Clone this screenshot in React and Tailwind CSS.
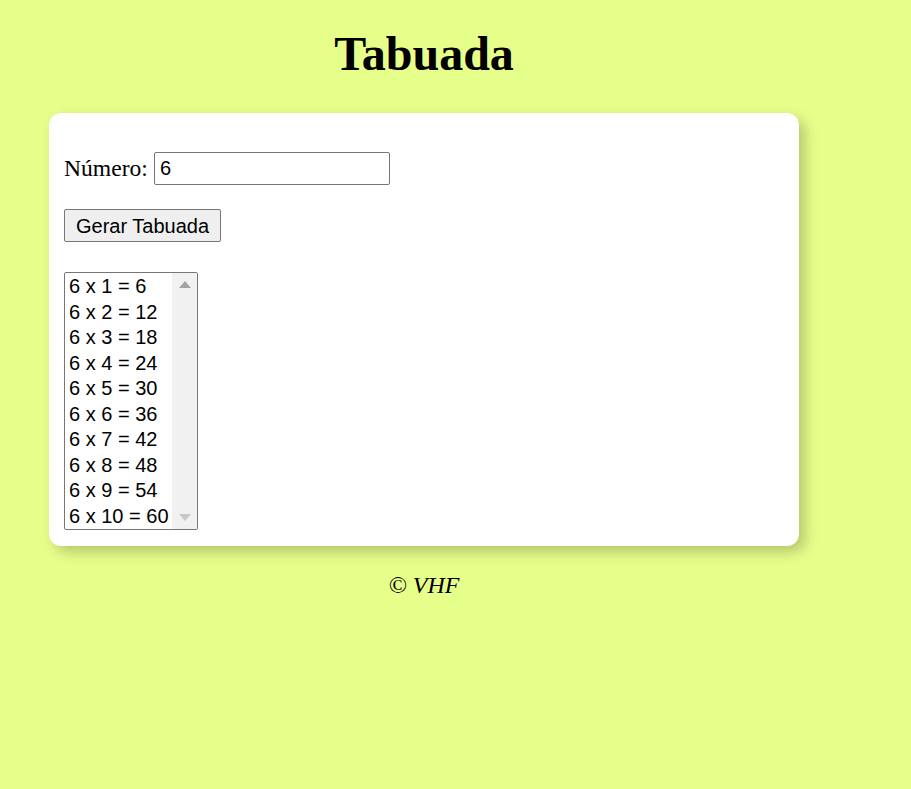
const rows = Array.from({ length: 10 }, (_, i) => `6 x ${i + 1} = ${6 * (i + 1)}`);

export default function App() {
  return (
    <div className="min-h-[789px] bg-[#e6ff8a] pt-[1px] font-['Liberation_Serif',serif] text-black">
      <div className="ml-[49px] w-[750px]">
        <h1 className="mt-[23px] text-center text-[48px] font-bold leading-[60px]">Tabuada</h1>

        <div className="mt-[29px] h-[433px] rounded-[12px] bg-white px-[15px] pt-[38px] shadow-[6px_6px_14px_rgba(0,0,0,0.22)]">
          <div className="flex items-center text-[23.6px]">
            <span>Número:</span>
            <input
              defaultValue="6"
              className="ml-[6px] h-[33px] w-[236px] rounded-[2px] border border-[#767676] px-[5px] font-['Liberation_Sans',sans-serif] text-[20px] outline-none"
            />
          </div>

          <button className="mt-[23px] h-[33px] w-[157px] rounded-[2px] border border-[#767676] bg-[#efefef] font-['Liberation_Sans',sans-serif] text-[20px]">
            Gerar Tabuada
          </button>

          <div className="mt-[30px] flex h-[258px] w-[134px] rounded-[2px] border border-[#767676] font-['Liberation_Sans',sans-serif] text-[20px]">
            <div className="flex-1 pt-[1px]">
              {rows.map((r) => (
                <div key={r} className="h-[25.5px] whitespace-nowrap pl-[4px] leading-[24px]">
                  {r}
                </div>
              ))}
            </div>
            <div className="flex w-[25px] flex-col items-center justify-between bg-[#f1f1f1] py-[8px]">
              <svg width="12" height="7" viewBox="0 0 12 7">
                <path d="M6 0 L12 7 L0 7 Z" fill="#a3a3a3" />
              </svg>
              <svg width="12" height="7" viewBox="0 0 12 7">
                <path d="M0 0 L12 0 L6 7 Z" fill="#c8c8c8" />
              </svg>
            </div>
          </div>
        </div>

        <p className="mt-[21px] text-center text-[24px] italic">© VHF</p>
      </div>
    </div>
  );
}
